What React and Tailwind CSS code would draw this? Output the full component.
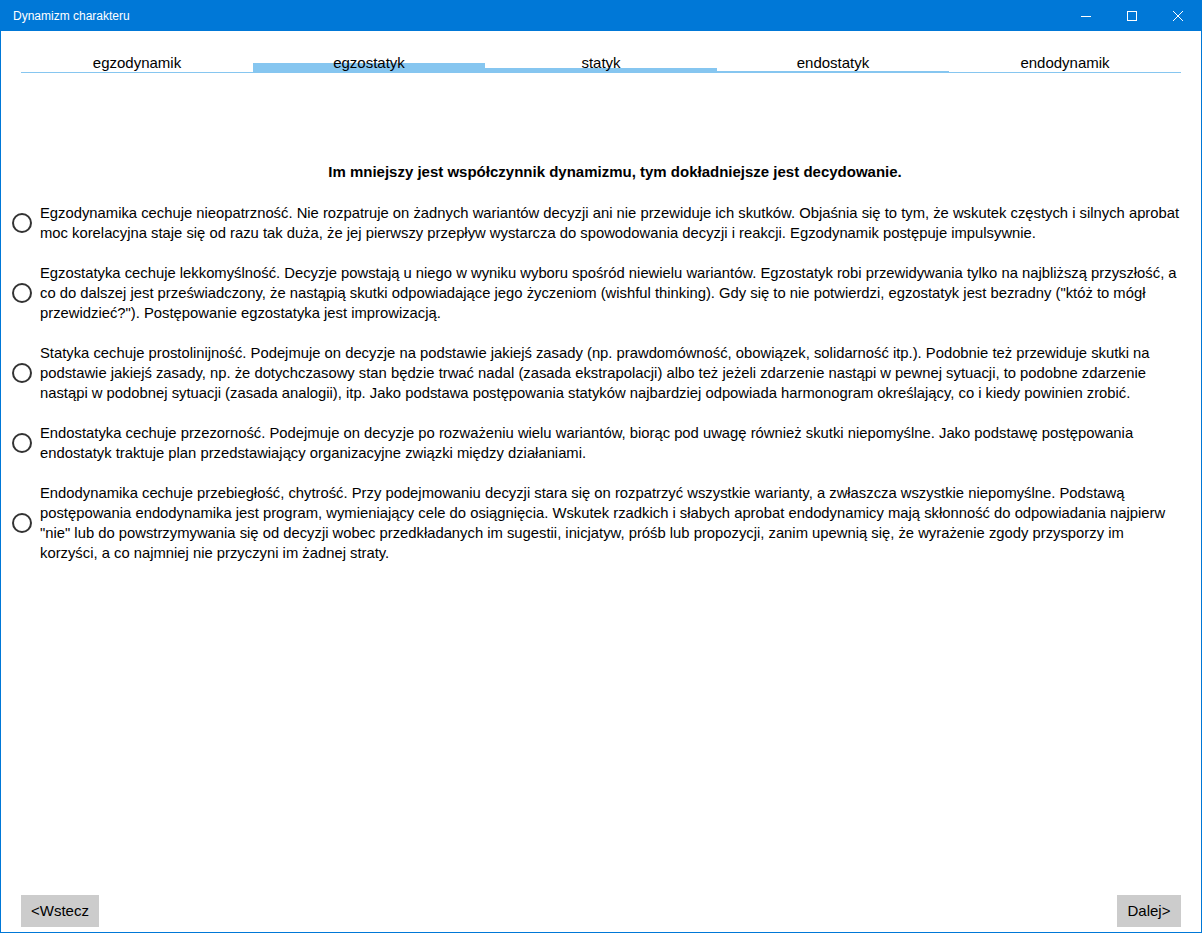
import React, {useState} from 'react'

const tabs = [
    {label: "egzodynamik", bar: "h-px"},
    {label: "egzostatyk", bar: "h-[10px]"},
    {label: "statyk", bar: "h-[5px]"},
    {label: "endostatyk", bar: "h-[2px]"},
    {label: "endodynamik", bar: "h-px"},
]

// line breaks follow the original window so the wrapping stays the same
const options = [
    [
        "Egzodynamika cechuje nieopatrzność. Nie rozpatruje on żadnych wariantów decyzji ani nie przewiduje ich skutków. Objaśnia się to tym, że wskutek częstych i silnych aprobat",
        "moc korelacyjna staje się od razu tak duża, że jej pierwszy przepływ wystarcza do spowodowania decyzji i reakcji. Egzodynamik postępuje impulsywnie.",
    ],
    [
        "Egzostatyka cechuje lekkomyślność. Decyzje powstają u niego w wyniku wyboru spośród niewielu wariantów. Egzostatyk robi przewidywania tylko na najbliższą przyszłość, a",
        "co do dalszej jest przeświadczony, że nastąpią skutki odpowiadające jego życzeniom (wishful thinking). Gdy się to nie potwierdzi, egzostatyk jest bezradny (\"któż to mógł",
        "przewidzieć?\"). Postępowanie egzostatyka jest improwizacją.",
    ],
    [
        "Statyka cechuje prostolinijność. Podejmuje on decyzje na podstawie jakiejś zasady (np. prawdomówność, obowiązek, solidarność itp.). Podobnie też przewiduje skutki na",
        "podstawie jakiejś zasady, np. że dotychczasowy stan będzie trwać nadal (zasada ekstrapolacji) albo też jeżeli zdarzenie nastąpi w pewnej sytuacji, to podobne zdarzenie",
        "nastąpi w podobnej sytuacji (zasada analogii), itp. Jako podstawa postępowania statyków najbardziej odpowiada harmonogram określający, co i kiedy powinien zrobić.",
    ],
    [
        "Endostatyka cechuje przezorność. Podejmuje on decyzje po rozważeniu wielu wariantów, biorąc pod uwagę również skutki niepomyślne. Jako podstawę postępowania",
        "endostatyk traktuje plan przedstawiający organizacyjne związki między działaniami.",
    ],
    [
        "Endodynamika cechuje przebiegłość, chytrość. Przy podejmowaniu decyzji stara się on rozpatrzyć wszystkie warianty, a zwłaszcza wszystkie niepomyślne. Podstawą",
        "postępowania endodynamika jest program, wymieniający cele do osiągnięcia. Wskutek rzadkich i słabych aprobat endodynamicy mają skłonność do odpowiadania najpierw",
        "\"nie\" lub do powstrzymywania się od decyzji wobec przedkładanych im sugestii, inicjatyw, próśb lub propozycji, zanim upewnią się, że wyrażenie zgody przysporzy im",
        "korzyści, a co najmniej nie przyczyni im żadnej straty.",
    ],
]

function TitleBar() {
    return (
        <div className="flex h-[31px] items-center bg-[#0078d7] text-white">
            <span className="pl-3 text-[12px]">Dynamizm charakteru</span>
            <div className="ml-auto flex h-full">
                <div className="flex w-[46px] items-center justify-center">
                    <svg width="10" height="10" viewBox="0 0 10 10"><path d="M0 5.5h10" stroke="white" strokeWidth="1" /></svg>
                </div>
                <div className="flex w-[46px] items-center justify-center">
                    <svg width="10" height="10" viewBox="0 0 10 10"><rect x="0.5" y="0.5" width="9" height="9" fill="none" stroke="white" strokeWidth="1" /></svg>
                </div>
                <div className="flex w-[46px] items-center justify-center">
                    <svg width="10" height="10" viewBox="0 0 10 10"><path d="M0 0L10 10M10 0L0 10" stroke="white" strokeWidth="1" /></svg>
                </div>
            </div>
        </div>
    )
}

function Radio({checked, onClick}) {
    return (
        <button onClick={onClick} className="flex h-5 w-5 shrink-0 items-center justify-center rounded-full border-2 border-[#333]">
            {checked && <span className="h-2.5 w-2.5 rounded-full bg-[#333]" />}
        </button>
    )
}

function App() {
    const [selected, setSelected] = useState(null)

    return (
        <div
            className="flex h-[933px] w-[1202px] flex-col border-x border-b border-[#0078d7] bg-white text-black"
            style={{fontFamily: '"Liberation Sans", Arial, sans-serif'}}
        >
            <TitleBar />

            <div className="mx-[20px] mt-[21px] grid grid-cols-5">
                {tabs.map(tab => (
                    <div key={tab.label} className="grid h-5">
                        <div className={`${tab.bar} self-end bg-[#86c6f0] [grid-area:1/1]`} />
                        <div className="pt-px text-center text-[15px] leading-5 [grid-area:1/1]">{tab.label}</div>
                    </div>
                ))}
            </div>

            <h1 className="mt-[90px] pl-7 text-center text-[15px] font-bold leading-5">
                Im mniejszy jest współczynnik dynamizmu, tym dokładniejsze jest decydowanie.
            </h1>

            <div className="mt-[21px] flex flex-col gap-5">
                {options.map((lines, i) => (
                    <div key={i} className="flex items-center gap-[8px] pl-[11px]">
                        <Radio checked={selected === i} onClick={() => setSelected(i)} />
                        <p className="whitespace-nowrap text-[14.8px] leading-5">
                            {lines.map((line, j) => (
                                <React.Fragment key={j}>
                                    {line}
                                    {j < lines.length - 1 && <br />}
                                </React.Fragment>
                            ))}
                        </p>
                    </div>
                ))}
            </div>

            <div className="mt-auto mb-[5px] flex justify-between px-[20px]">
                <button className="h-8 w-[78px] bg-[#cccccc] text-[15px]">&lt;Wstecz</button>
                <button className="h-8 w-[64px] bg-[#cccccc] text-[15px]">Dalej&gt;</button>
            </div>
        </div>
    )
}

export default App
